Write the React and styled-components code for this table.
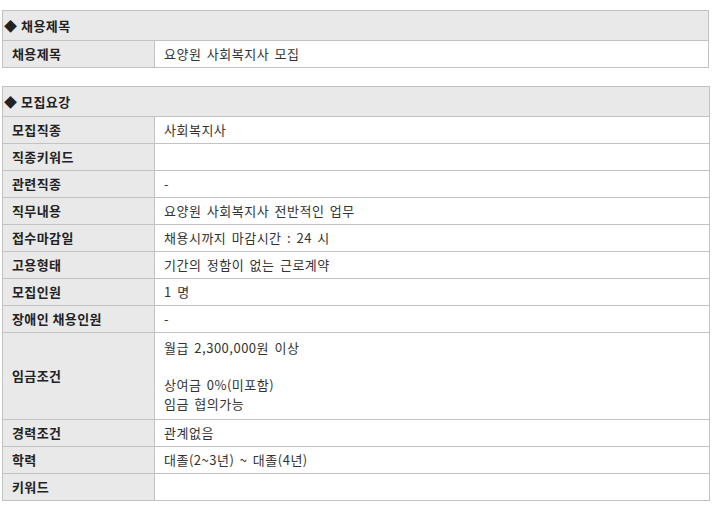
import React from "react";
import styled, { createGlobalStyle } from "styled-components";

const GlobalStyle = createGlobalStyle`
    body {
        margin: 0;
        background: #ffffff;
        font-family: "Noto Sans CJK KR", "Noto Sans", sans-serif;
        font-size: 13px;
        color: #333333;
    }
`;

const Page = styled.div`
    display: flex;
    flex-direction: column;
    gap: 18px;
    padding: 10px 0 0 2px;
`;

const Table = styled.div`
    width: ${props => props.width}px;
    box-sizing: border-box;
    border: 1px solid #c2c2c2;
    border-bottom: none;
`;

const Caption = styled.div`
    height: 29px;
    display: flex;
    align-items: center;
    padding-left: 1px;
    background: #e9e9e9;
    border-bottom: 1px solid #c2c2c2;
    font-weight: bold;
    color: #222222;
    letter-spacing: 0.5px;
    line-height: 16px;
`;

const Row = styled.div`
    display: flex;
    min-height: 26px;
    border-bottom: 1px solid #c2c2c2;
`;

const Label = styled.div`
    width: 152px;
    flex: none;
    display: flex;
    align-items: center;
    padding-left: 9px;
    box-sizing: border-box;
    background: #e9e9e9;
    border-right: 1px solid #c2c2c2;
    font-weight: bold;
    color: #222222;
    letter-spacing: 0.4px;
    line-height: 16px;
`;

const Value = styled.div`
    flex: 1;
    display: flex;
    flex-direction: column;
    justify-content: center;
    padding: ${props => (props.tall ? "6px 9px" : "0 9px")};
    line-height: ${props => (props.tall ? "18.5px" : "16px")};
    letter-spacing: 0.5px;
    word-spacing: 2px;
    color: #333333;
`;

const Blank = styled.div`
    height: 18.5px;
`;

const jobRows = [
    ["모집직종", "사회복지사"],
    ["직종키워드", ""],
    ["관련직종", "-"],
    ["직무내용", "요양원 사회복지사 전반적인 업무"],
    ["접수마감일", "채용시까지 마감시간 : 24 시"],
    ["고용형태", "기간의 정함이 없는 근로계약"],
    ["모집인원", "1 명"],
    ["장애인 채용인원", "-"],
];

const tailRows = [
    ["경력조건", "관계없음"],
    ["학력", "대졸(2~3년) ~ 대졸(4년)"],
    ["키워드", ""],
];

const InfoRow = ({ label, value }) => (
    <Row>
        <Label>{label}</Label>
        <Value>{value}</Value>
    </Row>
);

const App = () => {
    return (
        <>
            <GlobalStyle />
            <Page>
                <Table width={707}>
                    <Caption>◆ 채용제목</Caption>
                    <InfoRow label="채용제목" value="요양원 사회복지사 모집" />
                </Table>
                <Table width={708}>
                    <Caption>◆ 모집요강</Caption>
                    {jobRows.map(([label, value]) => (
                        <InfoRow key={label} label={label} value={value} />
                    ))}
                    <Row>
                        <Label>임금조건</Label>
                        <Value tall>
                            <div>월급 2,300,000원 이상</div>
                            <Blank />
                            <div>상여금 0%(미포함)</div>
                            <div>임금 협의가능</div>
                        </Value>
                    </Row>
                    {tailRows.map(([label, value]) => (
                        <InfoRow key={label} label={label} value={value} />
                    ))}
                </Table>
            </Page>
        </>
    );
};

export default App;
